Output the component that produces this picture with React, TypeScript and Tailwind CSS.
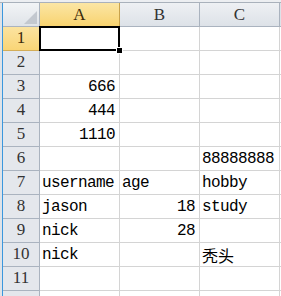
import React from "react";

const cols = ["A", "B", "C"];

type Cell = { v: string; right?: boolean; cjk?: boolean };

const rows: Record<number, Record<string, Cell>> = {
  3: { A: { v: "666", right: true } },
  4: { A: { v: "444", right: true } },
  5: { A: { v: "1110", right: true } },
  6: { C: { v: "88888888" } },
  7: { A: { v: "username" }, B: { v: "age" }, C: { v: "hobby" } },
  8: { A: { v: "jason" }, B: { v: "18", right: true }, C: { v: "study" } },
  9: { A: { v: "nick" }, B: { v: "28", right: true } },
  10: { A: { v: "nick" }, C: { v: "秃头", cjk: true } },
};

const mono = "font-['Liberation_Mono','Noto_Sans_CJK_SC',monospace]";
const serif = "font-['Liberation_Serif','DejaVu_Serif',serif]";

export default function App() {
  return (
    <div className="w-[281px] h-[296px] overflow-hidden bg-white select-none">
      {/* top strip */}
      <div className="h-[3px] bg-[#eceef1] border-b border-[#a9b1bb]" />
      <div className="flex">
        <div className="w-[2px] bg-[#dfe3e8]" />
        <div className="w-[1px] bg-[#3b97dd]" />
        <div className="flex-1">
          {/* column headers */}
          <div className="flex h-[24px]">
            <div className="relative w-[37px] h-[24px] border-r border-b border-[#aab3bf] bg-gradient-to-b from-[#f2f4f6] to-[#dfe3e8]">
              <div className="absolute right-[2px] bottom-[2px] w-0 h-0 border-l-[13px] border-l-transparent border-b-[13px] border-b-[#c3c8cf]" />
            </div>
            {cols.map((c) => (
              <div
                key={c}
                className={`w-[80px] h-[24px] border-r border-b flex items-center justify-center text-[17px] ${serif} ${
                  c === "A"
                    ? "bg-gradient-to-b from-[#fbe6a4] to-[#f8d36f] border-b-[#c89b36] border-r-[#c8a24c] text-[#3a2a0a]"
                    : "bg-gradient-to-b from-[#eef0f3] to-[#dde2e8] border-[#aab3bf] text-[#333]"
                }`}
              >
                {c}
              </div>
            ))}
            <div className="flex-1 border-b border-[#aab3bf] bg-[#dde2e8]" />
          </div>
          {Array.from({ length: 12 }, (_, i) => i + 1).map((r) => (
            <div key={r} className="flex h-[24px]">
              <div
                className={`w-[37px] h-[24px] border-r border-b flex items-end justify-center pb-[1px] text-[17px] leading-none ${serif} ${
                  r === 1
                    ? "bg-gradient-to-b from-[#fbe3a0] to-[#f9d576] border-r-[#c89b36] border-b-[#d3ad58] text-[#3a2a0a]"
                    : "bg-[#e4e7ec] border-[#aab3bf] text-[#333]"
                }`}
              >
                {r <= 11 && <span className="pb-[3px]">{r}</span>}
              </div>
              {cols.map((c) => {
                const cell = rows[r]?.[c];
                return (
                  <div
                    key={c}
                    className={`relative w-[80px] h-[24px] border-r border-b border-[#d4d4d4] flex items-end px-[2px] pb-[3px] leading-none text-black ${
                      cell?.right ? "justify-end pr-[4px]" : "justify-start"
                    } ${cell?.cjk ? "text-[16px] font-['Noto_Sans_CJK_SC',sans-serif] pb-[2px]" : `text-[16px] tracking-[-0.6px] ${mono}`}`}
                  >
                    {cell?.v}
                    {r === 1 && c === "A" && (
                      <>
                        <div className="absolute z-10 left-[-1px] top-[-1px] right-[-1px] bottom-[-1px] border-2 border-black" />
                        <div className="absolute z-20 right-[-4px] bottom-[-4px] w-[7px] h-[7px] bg-black border border-white" />
                      </>
                    )}
                  </div>
                );
              })}
              <div className="flex-1 border-b border-[#d4d4d4]" />
            </div>
          ))}
        </div>
      </div>
    </div>
  );
}
